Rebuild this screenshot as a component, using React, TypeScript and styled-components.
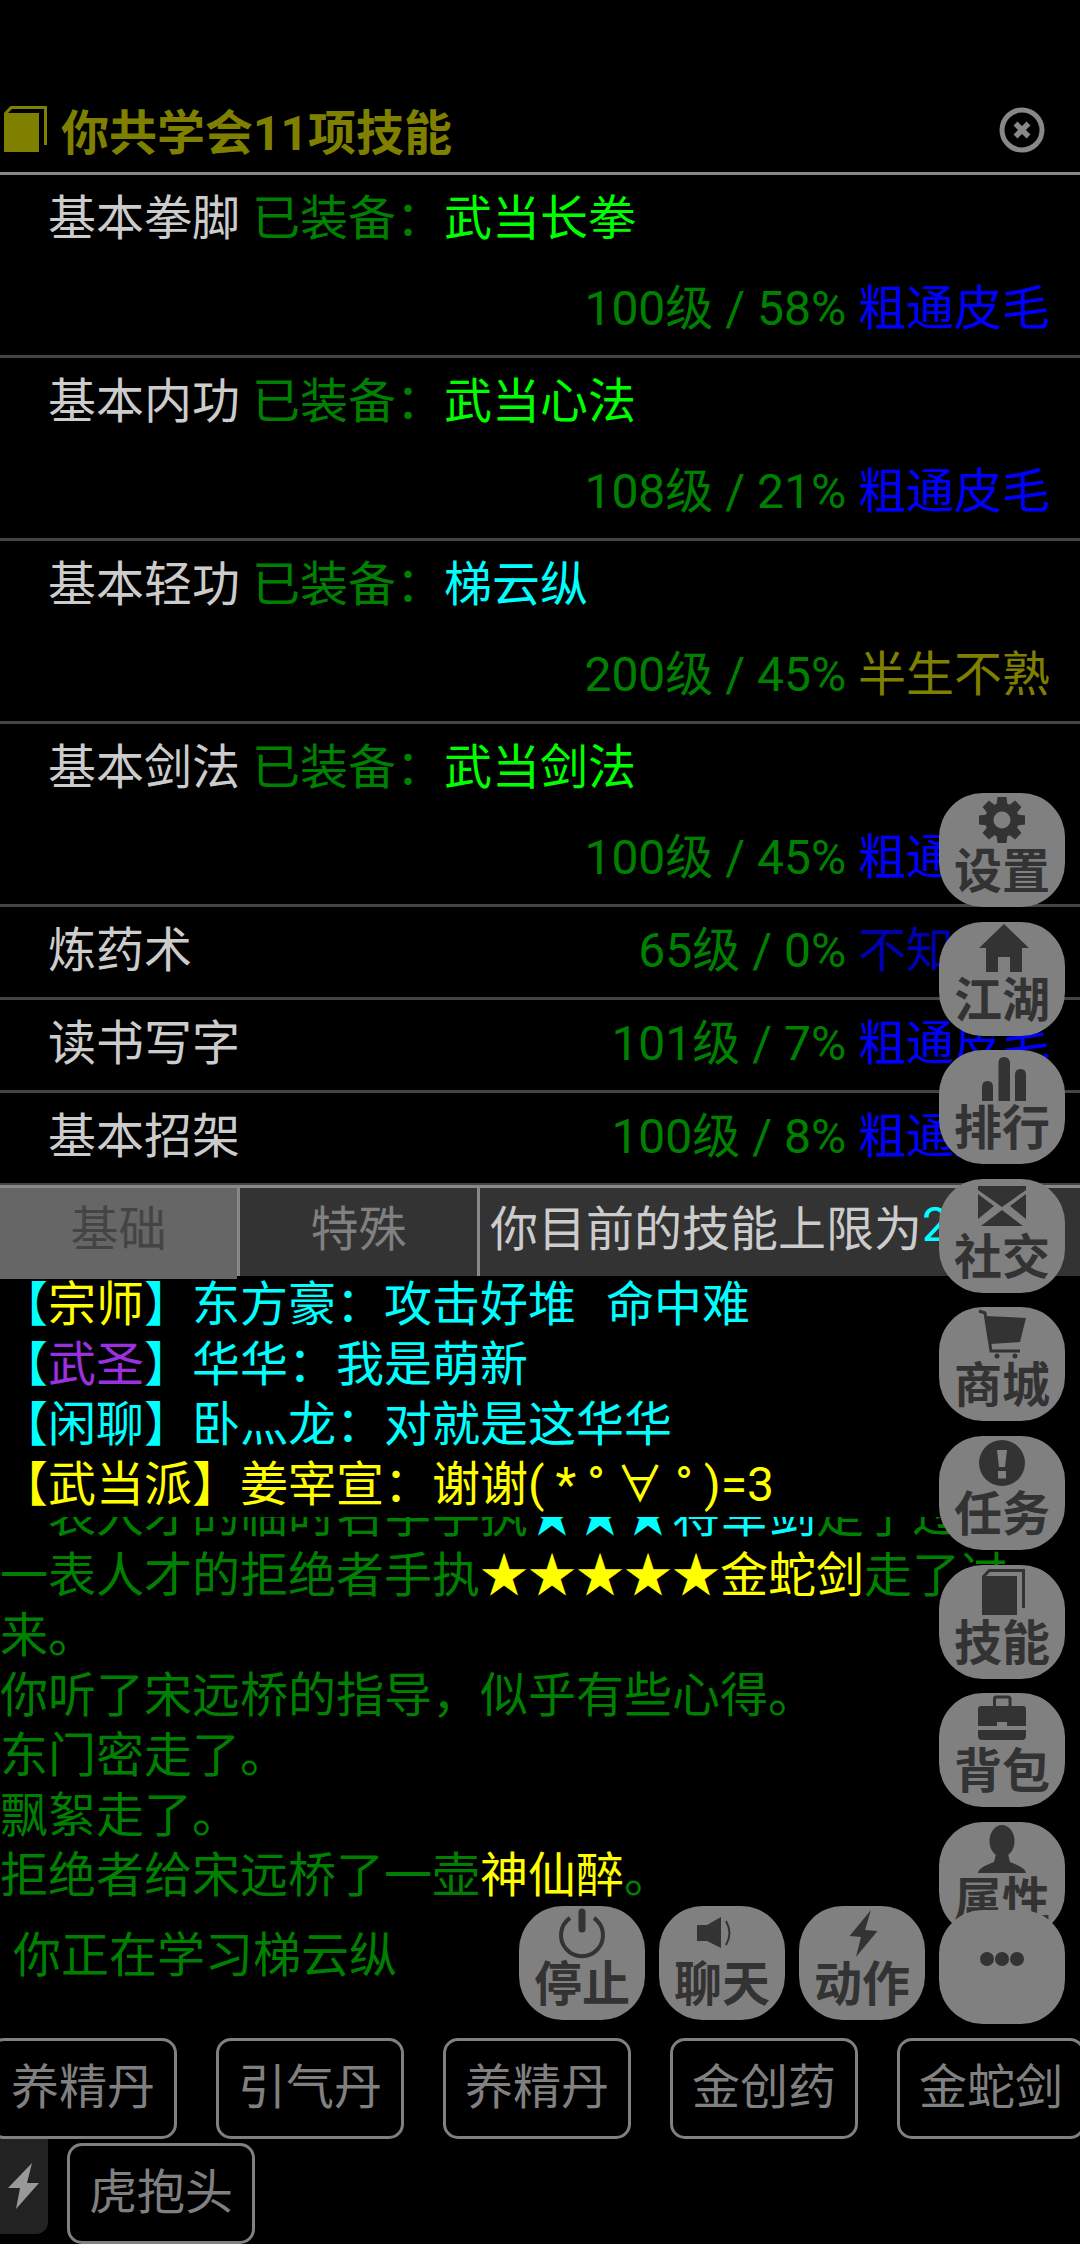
import styled, { createGlobalStyle } from "styled-components";

const GREEN = "#008000";
const LIME = "#00ff00";
const CYAN = "#00ffff";
const BLUE = "#0000ff";
const OLIVE = "#808000";
const YELLOW = "#ffff00";
const PURPLE = "#9b30e0";

const GlobalStyle = createGlobalStyle`
  html, body {
    margin: 0;
    padding: 0;
    background: #000;
  }
  body {
    font-family: Roboto, "Noto Sans CJK SC", sans-serif;
    font-size: 48px;
  }
`;

const StyledPage = styled.div`
  position: relative;
  width: 1080px;
  height: 2244px;
  overflow: hidden;
  background: #000;
`;
const StyledTitleBar = styled.div`
  display: flex;
  align-items: center;
  justify-content: space-between;
  box-sizing: border-box;
  height: 175px;
  padding: 92px 32px 0 4px;
  border-bottom: 3px solid #888;
  color: ${OLIVE};
`;
const StyledTitle = styled.div`
  display: flex;
  align-items: center;
  gap: 13px;
  margin-top: -6px;
  font-size: 48px;
  font-weight: 700;
`;
const StyledTitleIcon = styled.svg`
  width: 44px;
  height: 48px;
  fill: currentColor;
`;
const StyledCloseIcon = styled.svg`
  width: 48px;
  height: 48px;
  margin: -4px 2px 0 0;
`;
const StyledRow = styled.div`
  box-sizing: border-box;
  border-bottom: 3px solid #444;
  color: #ccc;
`;
const StyledLine = styled.div<{ $right?: boolean }>`
  display: flex;
  align-items: center;
  justify-content: ${(p) => (p.$right ? "flex-end" : "flex-start")};
  box-sizing: border-box;
  height: 90px;
  padding: 0 30px 13px 48px;
  white-space: pre;
`;
const StyledSingle = styled(StyledLine)`
  justify-content: space-between;
`;
const Tone = styled.span<{ $c: string }>`
  color: ${(p) => p.$c};
`;
const StyledTabs = styled.div`
  display: grid;
  grid-template-columns: 237px 237px 1fr;
  column-gap: 3px;
  height: 88px;
  border-top: 3px solid #888;
  border-bottom: 3px solid #888;
  background: #888;
  box-sizing: content-box;
  margin-top: -1px;
`;
const StyledTab = styled.div<{ $active?: boolean }>`
  display: flex;
  align-items: center;
  justify-content: center;
  padding-bottom: 15px;
  color: ${(p) => (p.$active ? "#444" : "#808080")};
  background: ${(p) => (p.$active ? "#666" : "#333")};
  box-shadow: ${(p) => (p.$active ? "0 3px 0 #666" : "none")};
`;
const StyledLimit = styled.div`
  display: flex;
  align-items: center;
  padding: 0 0 15px 10px;
  background: #333;
  color: #ccc;
  white-space: pre;
  overflow: hidden;
`;
const StyledChat = styled.div`
  box-sizing: border-box;
  height: 241px;
  margin-top: -3px;
  overflow: hidden;
  background: #000;
  & > :first-child {
    margin-top: -1px;
  }
`;
const StyledTextLine = styled.div`
  height: 60px;
  line-height: 60px;
  white-space: pre;
`;
const StyledWideGap = styled.span`
  display: inline-block;
  width: 30px;
`;
const StyledKaomoji = styled.span`
  letter-spacing: 11px;
`;
const StyledLog = styled.div`
  display: flex;
  flex-direction: column;
  justify-content: flex-end;
  height: 389px;
  overflow: hidden;
  color: ${GREEN};
`;
const StyledStatus = styled.div`
  position: relative;
  z-index: 2;
  display: flex;
  justify-content: space-between;
  height: 132px;
  padding: 0 15px 0 13px;
`;
const StyledStatusText = styled.div`
  margin-top: 17px;
  line-height: 66px;
  color: ${GREEN};
`;
const StyledActions = styled.div`
  display: flex;
  align-items: flex-start;
  gap: 14px;
`;
const StyledRoundButton = styled.div`
  display: flex;
  flex-direction: column;
  align-items: center;
  box-sizing: border-box;
  flex: none;
  width: 126px;
  height: 114px;
  padding-top: 2px;
  border-radius: 44px;
  background: #808080;
  color: #333;
  font-size: 48px;
  font-weight: 700;
  line-height: 54px;
`;
const StyledMoreButton = styled(StyledRoundButton)`
  margin-top: 4px;
`;
const StyledIcon = styled.svg`
  flex: none;
  width: 60px;
  height: 50px;
  overflow: visible;
  fill: currentColor;
`;
const StyledFloat = styled.div`
  position: absolute;
  z-index: 1;
  top: 793px;
  right: 15px;
  display: flex;
  flex-direction: column;
  gap: 14.6px;
`;
const StyledQuickRow = styled.div`
  display: flex;
  gap: 39px;
  height: 101px;
  margin-left: -11px;
`;
const StyledQuickButton = styled.div`
  display: flex;
  align-items: center;
  justify-content: center;
  flex: none;
  box-sizing: border-box;
  width: 188px;
  height: 101px;
  padding-bottom: 12px;
  border: 3px solid #808080;
  border-radius: 15px;
  color: #808080;
`;
const StyledSecondRow = styled.div`
  display: flex;
  align-items: flex-start;
`;
const StyledBoltTab = styled.div`
  display: flex;
  align-items: center;
  justify-content: center;
  width: 48px;
  height: 95px;
  border-bottom-right-radius: 12px;
  background: #222;
  color: #999;
`;
const StyledBoltIcon = styled.svg`
  width: 32px;
  height: 48px;
  fill: currentColor;
`;
const StyledSecondQuick = styled(StyledQuickButton)`
  margin: 4px 0 0 19px;
`;

const BookShape = () => (
  <path d="M10 9H45V48H10ZM10 9L16.500 2H53V41H50V5H18L14 9Z" />
);

const GearShape = () => (
  <>
    <circle cx="30" cy="25" r="12.75" fill="none" stroke="currentColor" strokeWidth="8.5" />
    {[0, 45, 90, 135, 180, 225, 270, 315].map((a) => (
      <path key={a} d="M25.5 2H34.5L35.5 10H24.5Z" transform={`rotate(${a} 30 25)`} />
    ))}
  </>
);

const icons: { [key: string]: React.ReactNode } = {
  gear: <GearShape />,
  home: <path d="M32 0L57 24H50V48H38V33H26V48H14V24H7Z" />,
  bars: (
    <path d="M10 49V35Q10 29 15.500 29T21 35V49ZM26.500 49V11Q26.500 5 32 5T38 11V49ZM43 49V23Q43 17 48.500 17T54 23V49Z" />
  ),
  mail: (
    <path d="M6 5H54V9L30 26L6 9ZM6 13L22 25L6 38ZM54 13L38 25L54 38ZM9 45L30 29L51 45Z" />
  ),
  cart: (
    <>
      <path d="M7 2L13 4L19 42H48" fill="none" stroke="currentColor" strokeWidth="3" />
      <path d="M14 7L54 9L48 33L18 35Z" />
      <circle cx="25" cy="47" r="2.500" />
      <circle cx="43" cy="47" r="2.500" />
    </>
  ),
  alert: (
    <path
      fillRule="evenodd"
      d="M30 2A23 23 0 1 1 30 48A23 23 0 1 1 30 2ZM25 12L27 29H33L35 12ZM26 33V40.500H34V33Z"
    />
  ),
  book: <BookShape />,
  bag: (
    <>
      <path d="M22.500 11V4Q22.500 2 24.500 2H36Q38 2 38 4V11" fill="none" stroke="currentColor" strokeWidth="3" />
      <path d="M9 11H51Q54 11 54 14V31H35V27H25V31H6V14Q6 11 9 11ZM6 35H54V41Q54 45 50 45H10Q6 45 6 41Z" />
    </>
  ),
  person: (
    <>
      <ellipse cx="30" cy="17" rx="12.500" ry="16" />
      <path d="M6 49H54Q54 44 38 38L36 30H24L22 38Q6 44 6 49Z" />
    </>
  ),
  power: (
    <>
      <path d="M18 10A21 21 0 1 0 42 10" fill="none" stroke="currentColor" strokeWidth="4" />
      <path d="M30 4V21" fill="none" stroke="currentColor" strokeWidth="7" strokeLinecap="round" />
    </>
  ),
  sound: (
    <>
      <path d="M5 17H15L29 9V40L15 33H5Z" />
      <path d="M34 13Q41 25 34 37" fill="none" stroke="currentColor" strokeWidth="2" />
    </>
  ),
  flash: <path d="M39 2L17.500 28L29 29L24 49L45.500 23L33 22Z" />,
  more: (
    <>
      <circle cx="15" cy="47" r="7" />
      <circle cx="30" cy="47" r="7" />
      <circle cx="45" cy="47" r="7" />
    </>
  ),
};

const RoundButton = (props: { icon: string; label?: string }) => {
  return (
    <StyledRoundButton>
      <StyledIcon viewBox="0 0 60 50">{icons[props.icon]}</StyledIcon>
      {props.label}
    </StyledRoundButton>
  );
};

type Skill = {
  name: string;
  weapon: string;
  weaponColor: string;
  level: string;
  rank: string;
  rankColor: string;
};

const equipped: Skill[] = [
  { name: "基本拳脚", weapon: "武当长拳", weaponColor: LIME, level: "100级 / 58% ", rank: "粗通皮毛", rankColor: BLUE },
  { name: "基本内功", weapon: "武当心法", weaponColor: LIME, level: "108级 / 21% ", rank: "粗通皮毛", rankColor: BLUE },
  { name: "基本轻功", weapon: "梯云纵", weaponColor: CYAN, level: "200级 / 45% ", rank: "半生不熟", rankColor: OLIVE },
  { name: "基本剑法", weapon: "武当剑法", weaponColor: LIME, level: "100级 / 45% ", rank: "粗通皮毛", rankColor: BLUE },
];

const plain = [
  { name: "炼药术", level: "65级 / 0% ", rank: "不知所云", rankColor: "#0000b0" },
  { name: "读书写字", level: "101级 / 7% ", rank: "粗通皮毛", rankColor: BLUE },
  { name: "基本招架", level: "100级 / 8% ", rank: "粗通皮毛", rankColor: BLUE },
];

const floatButtons = [
  { icon: "gear", label: "设置" },
  { icon: "home", label: "江湖" },
  { icon: "bars", label: "排行" },
  { icon: "mail", label: "社交" },
  { icon: "cart", label: "商城" },
  { icon: "alert", label: "任务" },
  { icon: "book", label: "技能" },
  { icon: "bag", label: "背包" },
  { icon: "person", label: "属性" },
];

const quickItems = ["养精丹", "引气丹", "养精丹", "金创药", "金蛇剑"];

export default function App() {
  return (
    <StyledPage>
      <GlobalStyle />
      <StyledTitleBar>
        <StyledTitle>
          <StyledTitleIcon viewBox="10 1 44 48">
            <BookShape />
          </StyledTitleIcon>
          你共学会11项技能
        </StyledTitle>
        <StyledCloseIcon viewBox="0 0 48 48" fill="none" stroke="#888">
          <circle cx="24" cy="24" r="20" strokeWidth="5" />
          <path d="M17.500 17.500L30.500 30.500M30.500 17.500L17.500 30.500" strokeWidth="5.500" />
        </StyledCloseIcon>
      </StyledTitleBar>

      {equipped.map((el) => (
        <StyledRow key={el.name}>
          <StyledLine>
            {el.name + " "}
            <Tone $c={GREEN}>已装备：</Tone>
            <Tone $c={el.weaponColor}>{el.weapon}</Tone>
          </StyledLine>
          <StyledLine $right>
            <Tone $c={GREEN}>{el.level}</Tone>
            <Tone $c={el.rankColor}>{el.rank}</Tone>
          </StyledLine>
        </StyledRow>
      ))}
      {plain.map((el) => (
        <StyledRow key={el.name}>
          <StyledSingle>
            {el.name}
            <span>
              <Tone $c={GREEN}>{el.level}</Tone>
              <Tone $c={el.rankColor}>{el.rank}</Tone>
            </span>
          </StyledSingle>
        </StyledRow>
      ))}

      <StyledTabs>
        <StyledTab $active>基础</StyledTab>
        <StyledTab>特殊</StyledTab>
        <StyledLimit>
          你目前的技能上限为<Tone $c={CYAN}>200</Tone>级
        </StyledLimit>
      </StyledTabs>

      <StyledChat>
        <StyledTextLine>
          <Tone $c={CYAN}>【</Tone>
          <Tone $c={YELLOW}>宗师</Tone>
          <Tone $c={CYAN}>
            】东方豪：攻击好堆
            <StyledWideGap />
            命中难
          </Tone>
        </StyledTextLine>
        <StyledTextLine>
          <Tone $c={CYAN}>【</Tone>
          <Tone $c={PURPLE}>武圣</Tone>
          <Tone $c={CYAN}>】华华：我是萌新</Tone>
        </StyledTextLine>
        <StyledTextLine>
          <Tone $c={CYAN}>【闲聊】卧灬龙：对就是这华华</Tone>
        </StyledTextLine>
        <StyledTextLine>
          <Tone $c={YELLOW}>
            【武当派】姜宰宣：谢谢<StyledKaomoji>(*°∀°</StyledKaomoji>)=3
          </Tone>
        </StyledTextLine>
      </StyledChat>

      <StyledLog>
        <StyledTextLine>
          一表人才的临时名字手执<Tone $c={CYAN}>★★★将军剑</Tone>走了过
        </StyledTextLine>
        <StyledTextLine>
          一表人才的拒绝者手执<Tone $c={YELLOW}>★★★★★金蛇剑</Tone>走了过
        </StyledTextLine>
        <StyledTextLine>来。</StyledTextLine>
        <StyledTextLine>你听了宋远桥的指导，似乎有些心得。</StyledTextLine>
        <StyledTextLine>东门密走了。</StyledTextLine>
        <StyledTextLine>飘絮走了。</StyledTextLine>
        <StyledTextLine>
          拒绝者给宋远桥了一壶<Tone $c={YELLOW}>神仙醉</Tone>。
        </StyledTextLine>
      </StyledLog>

      <StyledStatus>
        <StyledStatusText>你正在学习梯云纵</StyledStatusText>
        <StyledActions>
          <RoundButton icon="power" label="停止" />
          <RoundButton icon="sound" label="聊天" />
          <RoundButton icon="flash" label="动作" />
          <StyledMoreButton>
            <StyledIcon viewBox="0 0 60 50">{icons.more}</StyledIcon>
          </StyledMoreButton>
        </StyledActions>
      </StyledStatus>

      <StyledQuickRow>
        {quickItems.map((el, i) => (
          <StyledQuickButton key={i}>{el}</StyledQuickButton>
        ))}
      </StyledQuickRow>
      <StyledSecondRow>
        <StyledBoltTab>
          <StyledBoltIcon viewBox="8 2 32 48">
            <path d="M32 2L8 27L20 27L16 48L39 22L27 22Z" />
          </StyledBoltIcon>
        </StyledBoltTab>
        <StyledSecondQuick>虎抱头</StyledSecondQuick>
      </StyledSecondRow>

      <StyledFloat>
        {floatButtons.map((el) => (
          <RoundButton key={el.icon} icon={el.icon} label={el.label} />
        ))}
      </StyledFloat>
    </StyledPage>
  );
}
